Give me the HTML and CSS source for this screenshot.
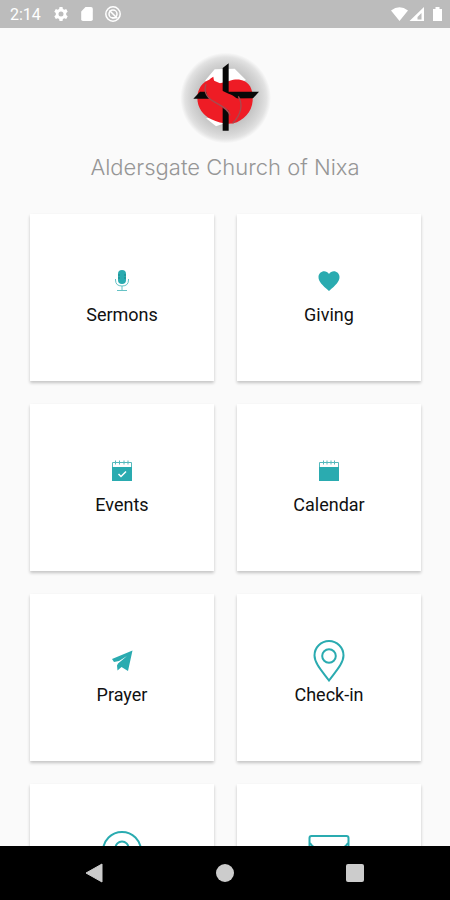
FILE: index.html
```html
<!DOCTYPE html>
<html lang="en">
<head>
<meta charset="utf-8">
<meta name="viewport" content="width=device-width, initial-scale=1">
<title>Aldersgate Church of Nixa</title>
<link rel="stylesheet" href="styles.css">
</head>
<body>
<div class="status-bar">
  <span class="time">2:14</span>
  <svg class="status-icon" viewBox="0 0 16 16" aria-hidden="true"><path fill-rule="evenodd" d="M6.500 1h3l.4 2 1.400.8 1.900-.7 1.500 2.600-1.500 1.300v2l1.500 1.300-1.500 2.600-1.900-.7-1.400.8-.4 2h-3l-.4-2-1.400-.8-1.900.7-1.500-2.600L2.800 9V7L1.300 5.700l1.500-2.600 1.900.7L6.100 3zM8 5.500a2.500 2.500 0 1 0 0 5 2.500 2.500 0 0 0 0-5z"/></svg>
  <svg class="status-icon" viewBox="0 0 16 16" aria-hidden="true"><path d="M6.500 1H12q1.800 0 1.800 1.800v10.400Q13.800 15 12 15H4q-1.800 0-1.800-1.800V5.500z"/></svg>
  <svg class="status-icon" viewBox="0 0 16 16" aria-hidden="true"><g fill="none" stroke="#fff" stroke-width="1.500"><circle cx="8" cy="8" r="7.200"/><circle cx="8" cy="8" r="4"/><path d="M4.500 4.500 12 12M7 11.800h5.500"/></g></svg>
  <span class="spacer"></span>
  <svg class="signals" viewBox="0 0 52 16" aria-hidden="true"><path d="M1 4.500Q9.500-2 18 4.500L9.500 15zM34 1v14H19.500zM43 3h2.500V1h4v2H52v12h-9z"/><path d="M31.500 7v6.500h-4V11z" fill="#bcbcbc"/></svg>
</div>
<main class="content">
  <header class="brand">
    <svg class="logo" viewBox="21 27 288 288" aria-hidden="true">
      <defs><radialGradient id="halo"><stop offset="0" stop-color="#b4b4b4"/><stop offset=".6" stop-color="#c4c4c4"/><stop offset=".8" stop-color="#d6d6d6"/><stop offset=".9" stop-color="#e2e2e2"/><stop offset="1" stop-color="#fafafa"/></radialGradient></defs>
      <circle cx="167" cy="174" r="136" fill="url(#halo)"/>
      <path d="M105 122 134 88l60-2 34 34-20 10h-90zM108 235l30 24 22-8-10-20z" fill="#fff"/>
      <path d="M122 118C96 126 82 148 82 174c0 30 18 52 42 64 20 10 46 16 66 12 30-8 56-34 58-68 1-26-4-48-24-58-14-8-32-6-44-2l-30 8z" fill="#ee1c25"/>
      <path d="M158 84 176 70v202h-18zM70 176l20-21h177l-18 20z" fill="#080808"/>
      <path d="M130 110c-25 12-30 48-10 66 20 19 57 27 65 48 3 9 3 18 0 28 26-22 34-52 18-74-10-13-30-17-46-26-18-10-25-24-27-42z" fill="#ee1c25"/>
      <path d="M108 132c-8 25 4 42 24 53 18 10 44 22 48 41M205 169c14 22 10 54-17 81" fill="none" stroke="#a64b50" stroke-width="4"/>
    </svg>
    <h1 class="title">Aldersgate Church of Nixa</h1>
  </header>
  <nav class="grid" aria-label="Sections">
    <button class="card" type="button">
      <svg class="icon" viewBox="0 0 42 42" aria-hidden="true"><rect x="17" y="10" width="8" height="14" rx="4" fill="#2aabb0"/><path d="M17 15h2M17 18h2M23 15h2M23 18h2" stroke="#1b8589"/><path d="M14.500 19v1q0 6 6.500 6t6.500-6v-1M21 26v4M16 30.500h10" fill="none" stroke="#66c2c5"/></svg>
      <span>Sermons</span>
    </button>
    <button class="card" type="button">
      <svg class="icon" viewBox="0 0 42 42" aria-hidden="true"><path d="M21 31C14 25 10.500 21.500 10.500 17c0-6 7.500-8 10.500-3 3-5 10.500-3 10.500 3 0 4.500-3.500 8-10.500 14z" fill="#2aabb0"/></svg>
      <span>Giving</span>
    </button>
    <button class="card" type="button">
      <svg class="icon" viewBox="0 0 42 42" aria-hidden="true"><path d="M11 17h20v14H11z" fill="#2aabb0"/><path d="M11.500 17v-4.500h19V17M14.500 10.500v4M18.500 10.500v4M23 10.500v4M27 10.500v4" fill="none" stroke="#56b9bd"/><path d="m17.500 24 2.500 2.500 5-5" fill="none" stroke="#fff" stroke-width="1.500"/></svg>
      <span>Events</span>
    </button>
    <button class="card" type="button">
      <svg class="icon" viewBox="0 0 42 42" aria-hidden="true"><path d="M11 17h20v14H11z" fill="#2aabb0"/><path d="M11.500 17v-4.500h19V17M15.500 10.500v4M19 10.500v4M23 10.500v4M26.500 10.500v4" fill="none" stroke="#56b9bd"/></svg>
      <span>Calendar</span>
    </button>
    <button class="card" type="button">
      <svg class="icon" viewBox="0 0 42 42" aria-hidden="true"><path d="M31.500 10.500 11 19l2 3 5-1 8-5-9 7.500-1 2 .5 5 4-3.500 6.500 4z" fill="#2aabb0"/></svg>
      <span>Prayer</span>
    </button>
    <button class="card" type="button">
      <svg class="icon" viewBox="0 0 42 42" aria-hidden="true"><g fill="none" stroke="#2aabb0" stroke-width="2"><path d="M21 40.500C14 31 6.500 23 6.500 15.500a14.500 14.500 0 0 1 29 0C35.500 23 28 31 21 40.500z"/><circle cx="21" cy="16" r="6.800"/></g></svg>
      <span>Check-in</span>
    </button>
    <button class="card" type="button" aria-label="Profile">
      <svg class="icon" viewBox="0 0 42 42" aria-hidden="true"><g fill="none" stroke="#2aabb0" stroke-width="2"><circle cx="21" cy="21" r="19"/><circle cx="21" cy="18" r="6.500"/><path d="M8 35q2-8 13-8t13 8"/></g></svg>
    </button>
    <button class="card" type="button" aria-label="Mail">
      <svg class="icon" viewBox="0 0 42 42" aria-hidden="true"><g fill="none" stroke="#2aabb0" stroke-width="2"><rect x="1.500" y="6" width="39" height="29" rx="2"/><path d="M2 13q2 3 5 5l14 9 14-9q3-2 5-5"/></g></svg>
    </button>
  </nav>
</main>
<footer class="system-nav">
  <button type="button" aria-label="Back"><svg viewBox="0 0 20 20" aria-hidden="true"><path d="M17 1v18L1 10z" stroke="#ccc" stroke-linejoin="round"/></svg></button>
  <button type="button" aria-label="Home"><svg viewBox="0 0 20 20" aria-hidden="true"><circle cx="10" cy="10" r="9"/></svg></button>
  <button type="button" aria-label="Recent apps"><svg viewBox="0 0 20 20" aria-hidden="true"><rect x="1" y="1" width="18" height="18" rx="2"/></svg></button>
</footer>
</body>
</html>
```
FILE: styles.css
```css
* { box-sizing: border-box; }

body {
  display: flex;
  flex-direction: column;
  height: 100vh;
  margin: 0;
  background: #fafafa;
  font-family: Roboto, "Liberation Sans", sans-serif;
}

button {
  border: 0;
  padding: 0;
  font: inherit;
}

.status-bar {
  display: flex;
  flex: none;
  align-items: center;
  gap: 10px;
  height: 28px;
  padding: 0 8px 0 10px;
  background: #bcbcbc;
  color: #fff;
  fill: #fff;
}

.time {
  margin-right: 2px;
  font-size: 16px;
}

.status-icon {
  width: 16px;
  height: 16px;
}

.spacer { flex: 1; }

.signals {
  width: 52px;
  height: 16px;
}

.content {
  flex: 1;
  min-height: 0;
  overflow: hidden;
}

.brand {
  display: flex;
  flex-direction: column;
  align-items: center;
  gap: 8px;
  padding: 21px 16px 33px;
}

.logo {
  width: 96px;
  height: 96px;
}

.title {
  margin: 0;
  color: #969696;
  font-family: Inter, sans-serif;
  font-size: 22px;
  font-weight: 300;
  line-height: 28px;
}

.grid {
  display: grid;
  grid-template-columns: 1fr 1fr;
  gap: 23px;
  padding: 0 29px 24px 30px;
}

.card {
  display: flex;
  flex-direction: column;
  align-items: center;
  height: 167px;
  padding-top: 46px;
  background: #fff;
  box-shadow: 0 2px 3px rgba(0, 0, 0, 0.22);
  color: #111;
  font-size: 18px;
  line-height: 26px;
}

.icon {
  width: 42px;
  height: 42px;
}

.system-nav {
  display: flex;
  flex: none;
  justify-content: space-around;
  align-items: center;
  height: 54px;
  padding: 0 30px;
  background: #000;
}

.system-nav button {
  width: 48px;
  height: 48px;
  background: transparent;
}

.system-nav svg {
  display: block;
  width: 20px;
  height: 20px;
  margin: auto;
  fill: #ccc;
}
```
